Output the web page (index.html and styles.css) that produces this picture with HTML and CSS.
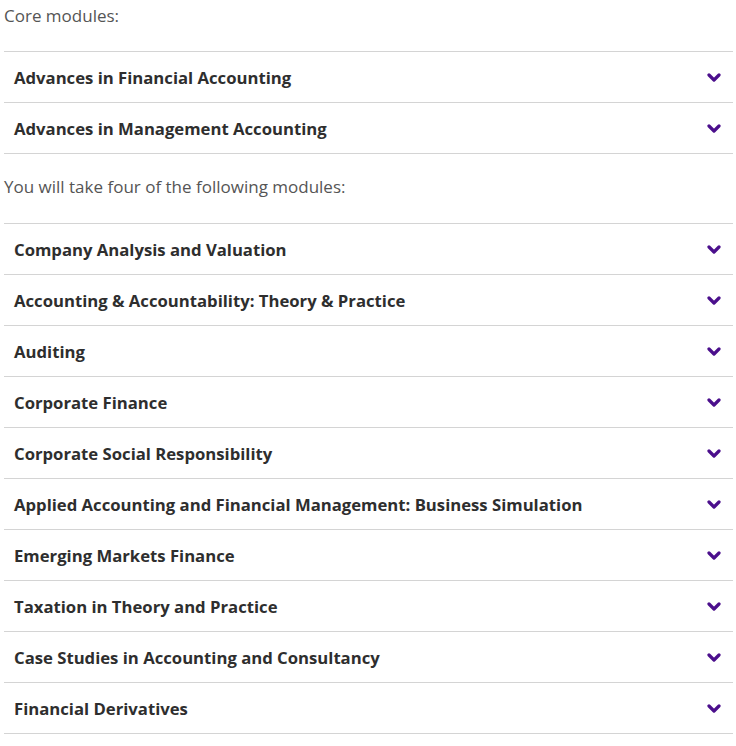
FILE: index.html
```html
<!DOCTYPE html>
<html>
<head>
<meta charset="utf-8">
<link rel="stylesheet" href="styles.css">
</head>
<body>
<div class="page">
  <p class="intro">Core modules:</p>
  <ul class="modules">
    <li class="module"><span class="title">Advances in Financial Accounting</span><svg class="chev" viewBox="0 0 14 10" width="14" height="10"><path d="M2 3 L7 8 L12 3" /></svg></li>
    <li class="module"><span class="title">Advances in Management Accounting</span><svg class="chev" viewBox="0 0 14 10" width="14" height="10"><path d="M2 3 L7 8 L12 3" /></svg></li>
  </ul>
  <p class="intro">You will take four of the following modules:</p>
  <ul class="modules">
    <li class="module"><span class="title">Company Analysis and Valuation</span><svg class="chev" viewBox="0 0 14 10" width="14" height="10"><path d="M2 3 L7 8 L12 3" /></svg></li>
    <li class="module"><span class="title">Accounting &amp; Accountability: Theory &amp; Practice</span><svg class="chev" viewBox="0 0 14 10" width="14" height="10"><path d="M2 3 L7 8 L12 3" /></svg></li>
    <li class="module"><span class="title">Auditing</span><svg class="chev" viewBox="0 0 14 10" width="14" height="10"><path d="M2 3 L7 8 L12 3" /></svg></li>
    <li class="module"><span class="title">Corporate Finance</span><svg class="chev" viewBox="0 0 14 10" width="14" height="10"><path d="M2 3 L7 8 L12 3" /></svg></li>
    <li class="module"><span class="title">Corporate Social Responsibility</span><svg class="chev" viewBox="0 0 14 10" width="14" height="10"><path d="M2 3 L7 8 L12 3" /></svg></li>
    <li class="module"><span class="title">Applied Accounting and Financial Management: Business Simulation</span><svg class="chev" viewBox="0 0 14 10" width="14" height="10"><path d="M2 3 L7 8 L12 3" /></svg></li>
    <li class="module"><span class="title">Emerging Markets Finance</span><svg class="chev" viewBox="0 0 14 10" width="14" height="10"><path d="M2 3 L7 8 L12 3" /></svg></li>
    <li class="module"><span class="title">Taxation in Theory and Practice</span><svg class="chev" viewBox="0 0 14 10" width="14" height="10"><path d="M2 3 L7 8 L12 3" /></svg></li>
    <li class="module"><span class="title">Case Studies in Accounting and Consultancy</span><svg class="chev" viewBox="0 0 14 10" width="14" height="10"><path d="M2 3 L7 8 L12 3" /></svg></li>
    <li class="module"><span class="title">Financial Derivatives</span><svg class="chev" viewBox="0 0 14 10" width="14" height="10"><path d="M2 3 L7 8 L12 3" /></svg></li>
  </ul>
</div>
</body>
</html>
```
FILE: styles.css
```css
* { box-sizing: border-box; }
body {
  margin: 0;
  background: #fff;
  font-family: "Open Sans", "Liberation Sans", sans-serif;
  color: #333;
}
.page {
  padding: 0 3px 0 4px;
}
.intro {
  margin: 0;
  height: 51px;
  padding-top: 5px;
  font-size: 17px;
  line-height: 22px;
  font-weight: 400;
  color: #555;
}
.modules {
  list-style: none;
  margin: 0;
  padding: 0;
  border-top: 1px solid #d4d4d4;
}
.modules + .intro {
  margin-top: 17px;
  height: 52px;
}
.module {
  display: flex;
  align-items: center;
  justify-content: space-between;
  height: 51px;
  padding: 0 12px 0 10px;
  border-bottom: 1px solid #d4d4d4;
}
.title {
  font-size: 16.7px;
  font-weight: 700;
  color: #2e2e2e;
}
.chev {
  fill: none;
  stroke: #4b0f8c;
  stroke-width: 3.2;
  stroke-linecap: round;
  stroke-linejoin: round;
}
```
